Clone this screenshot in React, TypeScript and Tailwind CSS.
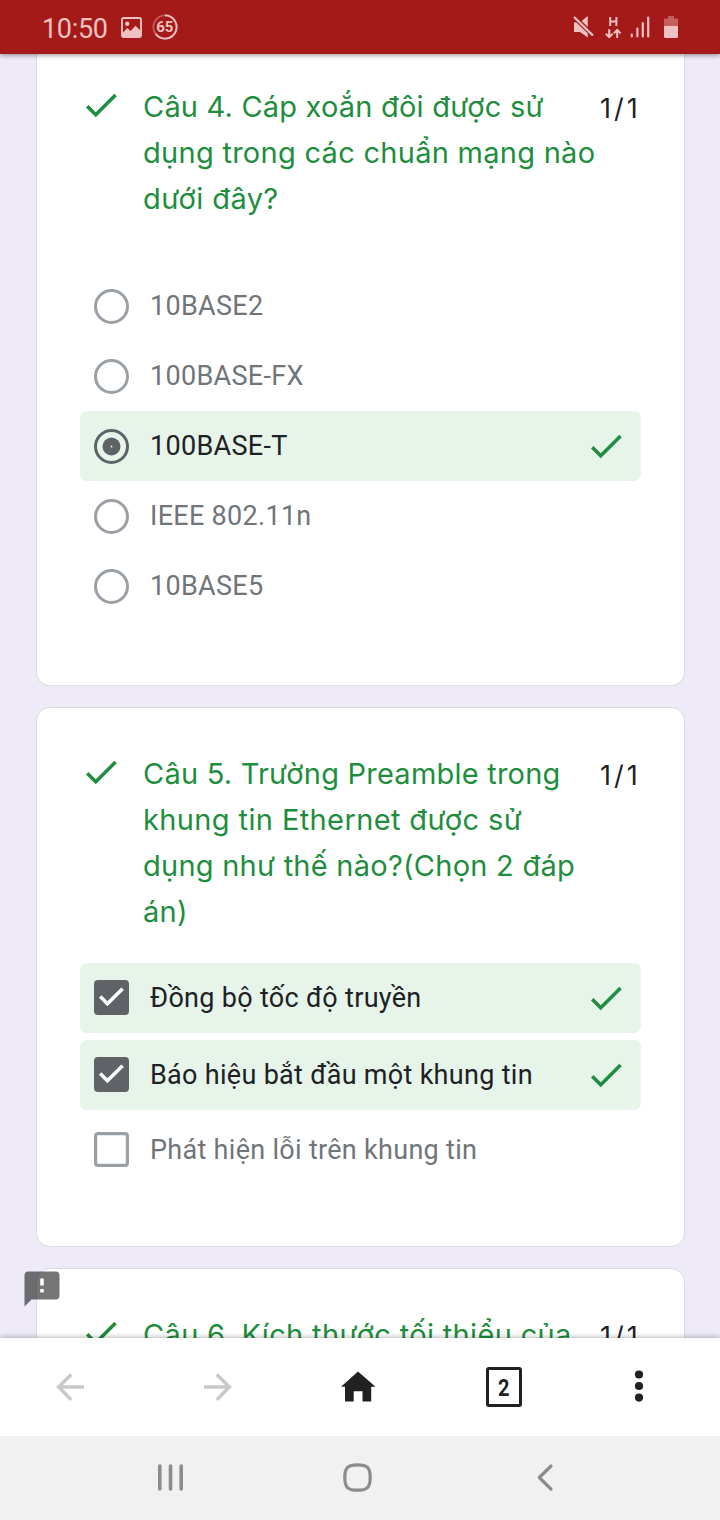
import type { ReactNode } from "react";

const HEAD = "font-['Inter','Roboto',sans-serif]";

function Check({ className = "" }: { className?: string }) {
  return (
    <svg viewBox="0 0 24 24" className={`size-[42px] shrink-0 fill-[#1e8e3e] ${className}`}>
      <path d="M9 16.17 4.83 12l-1.42 1.41L9 19 21 7l-1.41-1.41z" />
    </svg>
  );
}

type Line = { text: string; spacing: string };

function Question({ lines, score }: { lines: Line[]; score: string }) {
  return (
    <div className="flex h-[46px] items-start">
      <Check />
      <h2 className={`ml-[21px] w-[457px] text-[29px] leading-[46px] font-normal text-[#1e8e3e] ${HEAD}`}>
        {lines.map((l) => (
          <span key={l.text} className={`block whitespace-nowrap ${l.spacing}`}>
            {l.text}
          </span>
        ))}
      </h2>
      <span className={`pt-[2px] text-[27px] leading-[46px] font-normal tracking-[3px] text-[#202124] ${HEAD}`}>{score}</span>
    </div>
  );
}

function Radio({ checked = false }: { checked?: boolean }) {
  return (
    <svg viewBox="0 0 35 35" className="size-[35px] shrink-0">
      <circle cx="17.5" cy="17.5" r="16" fill="none" strokeWidth="3" stroke={checked ? "#5f6368" : "#9aa0a6"} />
      {checked && <circle cx="17.5" cy="17.5" r="9" fill="#5f6368" />}
      {checked && <circle cx="17.5" cy="17.5" r="1" fill="#e6f4ea" />}
    </svg>
  );
}

function Checkbox({ checked = false }: { checked?: boolean }) {
  return (
    <svg viewBox="0 0 35 35" className="-mt-px size-[35px] shrink-0">
      {checked ? (
        <>
          <rect width="35" height="35" rx="4" fill="#5f6368" />
          <path d="M6.2 16.5 13.4 23.7 28.6 8.8" fill="none" stroke="#fff" strokeWidth="3.6" />
        </>
      ) : (
        <rect x="1.6" y="1.6" width="31.8" height="31.8" rx="2.4" fill="none" stroke="#9aa0a6" strokeWidth="3.2" />
      )}
    </svg>
  );
}

function Option({ control, text, correct = false }: { control: ReactNode; text: string; correct?: boolean }) {
  return (
    <div className={`flex h-[70px] items-center rounded-[7px] px-[14px] ${correct ? "bg-[#e6f4ea]" : ""}`}>
      {control}
      <span
        className={`ml-[21px] flex-1 font-['Roboto',sans-serif] text-[27px] leading-[40px] tracking-[0.3px] whitespace-nowrap ${
          correct ? "text-[#202124]" : "text-[#70757a]"
        }`}
      >
        {text}
      </span>
      {correct && <Check />}
    </div>
  );
}

function StatusBar() {
  return (
    <header className="z-10 flex h-[54px] shrink-0 items-center bg-[#a41a18] pr-[39px] pl-[42px] text-[#efc1c2] shadow-[0_1px_5px_rgba(0,0,0,0.45)]">
      <span className="pt-[3px] font-['Roboto',sans-serif] text-[27px] leading-[32px] tracking-[-0.3px]">10:50</span>
      <svg viewBox="0 0 21 21" className="ml-[13px] size-[21px]">
        <rect x="1" y="1" width="19" height="19" rx="1.5" fill="none" stroke="currentColor" strokeWidth="1.9" />
        <circle cx="6.2" cy="6.8" r="2.2" fill="currentColor" />
        <path d="M1 16.5 6.3 11l3.2 3 5-5.3 5.5 5.3V20H1z" fill="currentColor" />
      </svg>
      <div className="relative ml-[10px] flex size-[26px] items-center justify-center">
        <svg viewBox="0 0 26 26" className="absolute inset-0 size-[26px]" fill="none" stroke="currentColor" strokeWidth="1.8">
          <circle cx="13" cy="13" r="11.6" opacity=".4" />
          <path d="M13 1.4A11.6 11.6 0 1 1 3.6 19.8" />
        </svg>
        <span className="font-['Roboto',sans-serif] text-[15px] leading-none font-bold">65</span>
      </div>
      <div className="flex-1" />
      <svg viewBox="0 0 108 26" className="h-[26px] w-[108px]" fill="currentColor">
        <path d="M1 8.2h6L14.8 2v21.5L7 18H1z" />
        <path d="M1.3 3.2 21 22.2" stroke="#a41a18" strokeWidth="4.6" />
        <path d="M1 3 20 21.5" stroke="currentColor" strokeWidth="2.4" />
        <path d="M37.2 3v9M43.4 3v9M37.2 7.4h6.2" fill="none" stroke="currentColor" strokeWidth="2" />
        <path d="M36.2 15.2V23M32.8 19.8l3.4 3.4 3.4-3.4M44.2 24v-7.6M40.8 19.4l3.4-3.4 3.4 3.4" fill="none" stroke="currentColor" strokeWidth="2" />
        <path d="M58.800 20.500v1.900M64.400 14.600v7.800M69.800 9.200v13.200M75.200 3.600v18.800" fill="none" stroke="currentColor" strokeWidth="2.200" strokeLinecap="round" />
        <path d="M95 2h6v2.4h4V13H91V4.400h4z" opacity=".42" />
        <path d="M91 12h14v10.500a1.500 1.500 0 0 1-1.500 1.500h-11a1.500 1.500 0 0 1-1.500-1.500z" />
      </svg>
    </header>
  );
}

export default function App() {
  return (
    <div className="flex h-[1520px] w-[720px] flex-col overflow-hidden bg-[#eeeaf8]">
      <StatusBar />
      <main className="relative flex h-[1284px] shrink-0 flex-col gap-[21px] overflow-hidden pr-[35px] pl-[36px]">
        <section className="h-[632px] shrink-0 rounded-b-[14px] border border-t-0 border-[#dadce0] bg-white px-[43px] pt-[30px]">
          <Question
            score="1/1"
            lines={[
              { text: "Câu 4. Cáp xoắn đôi được sử", spacing: "tracking-[0.2px]" },
              { text: "dụng trong các chuẩn mạng nào", spacing: "tracking-[0.28px]" },
              { text: "dưới đây?", spacing: "tracking-[0.4px]" },
            ]}
          />
          <div className="mt-[141px]">
            <Option control={<Radio />} text="10BASE2" />
            <Option control={<Radio />} text="100BASE-FX" />
            <Option control={<Radio checked />} text="100BASE-T" correct />
            <Option control={<Radio />} text="IEEE 802.11n" />
            <Option control={<Radio />} text="10BASE5" />
          </div>
        </section>

        <section className="h-[540px] shrink-0 rounded-[14px] border border-[#dadce0] bg-white px-[43px] pt-[43px]">
          <Question
            score="1/1"
            lines={[
              { text: "Câu 5. Trường Preamble trong", spacing: "tracking-[0.22px]" },
              { text: "khung tin Ethernet được sử", spacing: "tracking-[0.38px]" },
              { text: "dụng như thế nào?(Chọn 2 đáp", spacing: "tracking-[0.25px]" },
              { text: "án)", spacing: "tracking-[0.3px]" },
            ]}
          />
          <div className="mt-[166px]">
            <Option control={<Checkbox checked />} text="Đồng bộ tốc độ truyền" correct />
            <div className="mt-[7px]">
              <Option control={<Checkbox checked />} text="Báo hiệu bắt đầu một khung tin" correct />
            </div>
            <div className="mt-[5px]">
              <Option control={<Checkbox />} text="Phát hiện lỗi trên khung tin" />
            </div>
          </div>
        </section>

        <section className="h-[300px] shrink-0 rounded-[14px] border border-[#dadce0] bg-white px-[43px] pt-[43px]">
          <Question score="1/1" lines={[{ text: "Câu 6. Kích thước tối thiểu của", spacing: "tracking-[0.33px]" }]} />
        </section>

        <svg viewBox="0 0 24 24" className="absolute top-[1214px] left-[21px] size-[42px]">
          <path d="M20 2H4c-1.100 0-2 .9-2 2v18l4-4h14c1.100 0 2-.9 2-2V4c0-1.100-.9-2-2-2z" fill="#000" fillOpacity=".54" />
          <path d="M11 12h2v2h-2zM11 6h2v4h-2z" fill="#fff" />
        </svg>
      </main>

      <nav className="z-10 h-[98px] shrink-0 bg-white shadow-[0_-1px_5px_rgba(0,0,0,0.28)]">
        <svg viewBox="0 0 720 98" className="h-[98px] w-[720px]">
          <g fill="none" stroke="#c8c8c8" strokeWidth="3.4">
            <path d="M84 49H58.500M71.200 36.500 58.600 49l12.600 12.800" />
            <path d="M204 49h25.500M216.800 36.500 229.400 49l-12.600 12.800" />
          </g>
          <path d="M358 33.500 375.500 48.700h-4.300V63.500h-8.700V53.200h-8.800v10.300H345V48.700h-4z" fill="#212121" />
          <rect x="487.500" y="30.500" width="33" height="37" rx="1.500" fill="none" stroke="#212121" strokeWidth="3" />
          <text x="503.700" y="58.300" textAnchor="middle" fill="#212121" className="font-['Roboto',sans-serif] text-[23px] font-bold" textLength="11.500" lengthAdjust="spacingAndGlyphs">
            2
          </text>
          <g fill="#212121">
            <circle cx="639" cy="36.500" r="4.100" />
            <circle cx="639" cy="48" r="4.100" />
            <circle cx="639" cy="59.600" r="4.100" />
          </g>
        </svg>
      </nav>

      <footer className="z-10 h-[84px] shrink-0 bg-[#f1f1f1]">
        <svg viewBox="0 0 720 84" className="h-[84px] w-[720px]" fill="none" stroke="#8c8c8c" strokeWidth="3.200" strokeLinecap="round" strokeLinejoin="round">
          <path d="M159.800 30v23M170.500 30v23M181.200 30v23" strokeWidth="3.600" />
          <path d="M357.500 28.800c9.800 0 12.700 2.900 12.700 12.700s-2.900 12.700-12.700 12.700-12.700-2.900-12.700-12.700 2.900-12.700 12.700-12.700z" />
          <path d="M551 30 539.300 41.500 551 53.200" />
        </svg>
      </footer>
    </div>
  );
}
